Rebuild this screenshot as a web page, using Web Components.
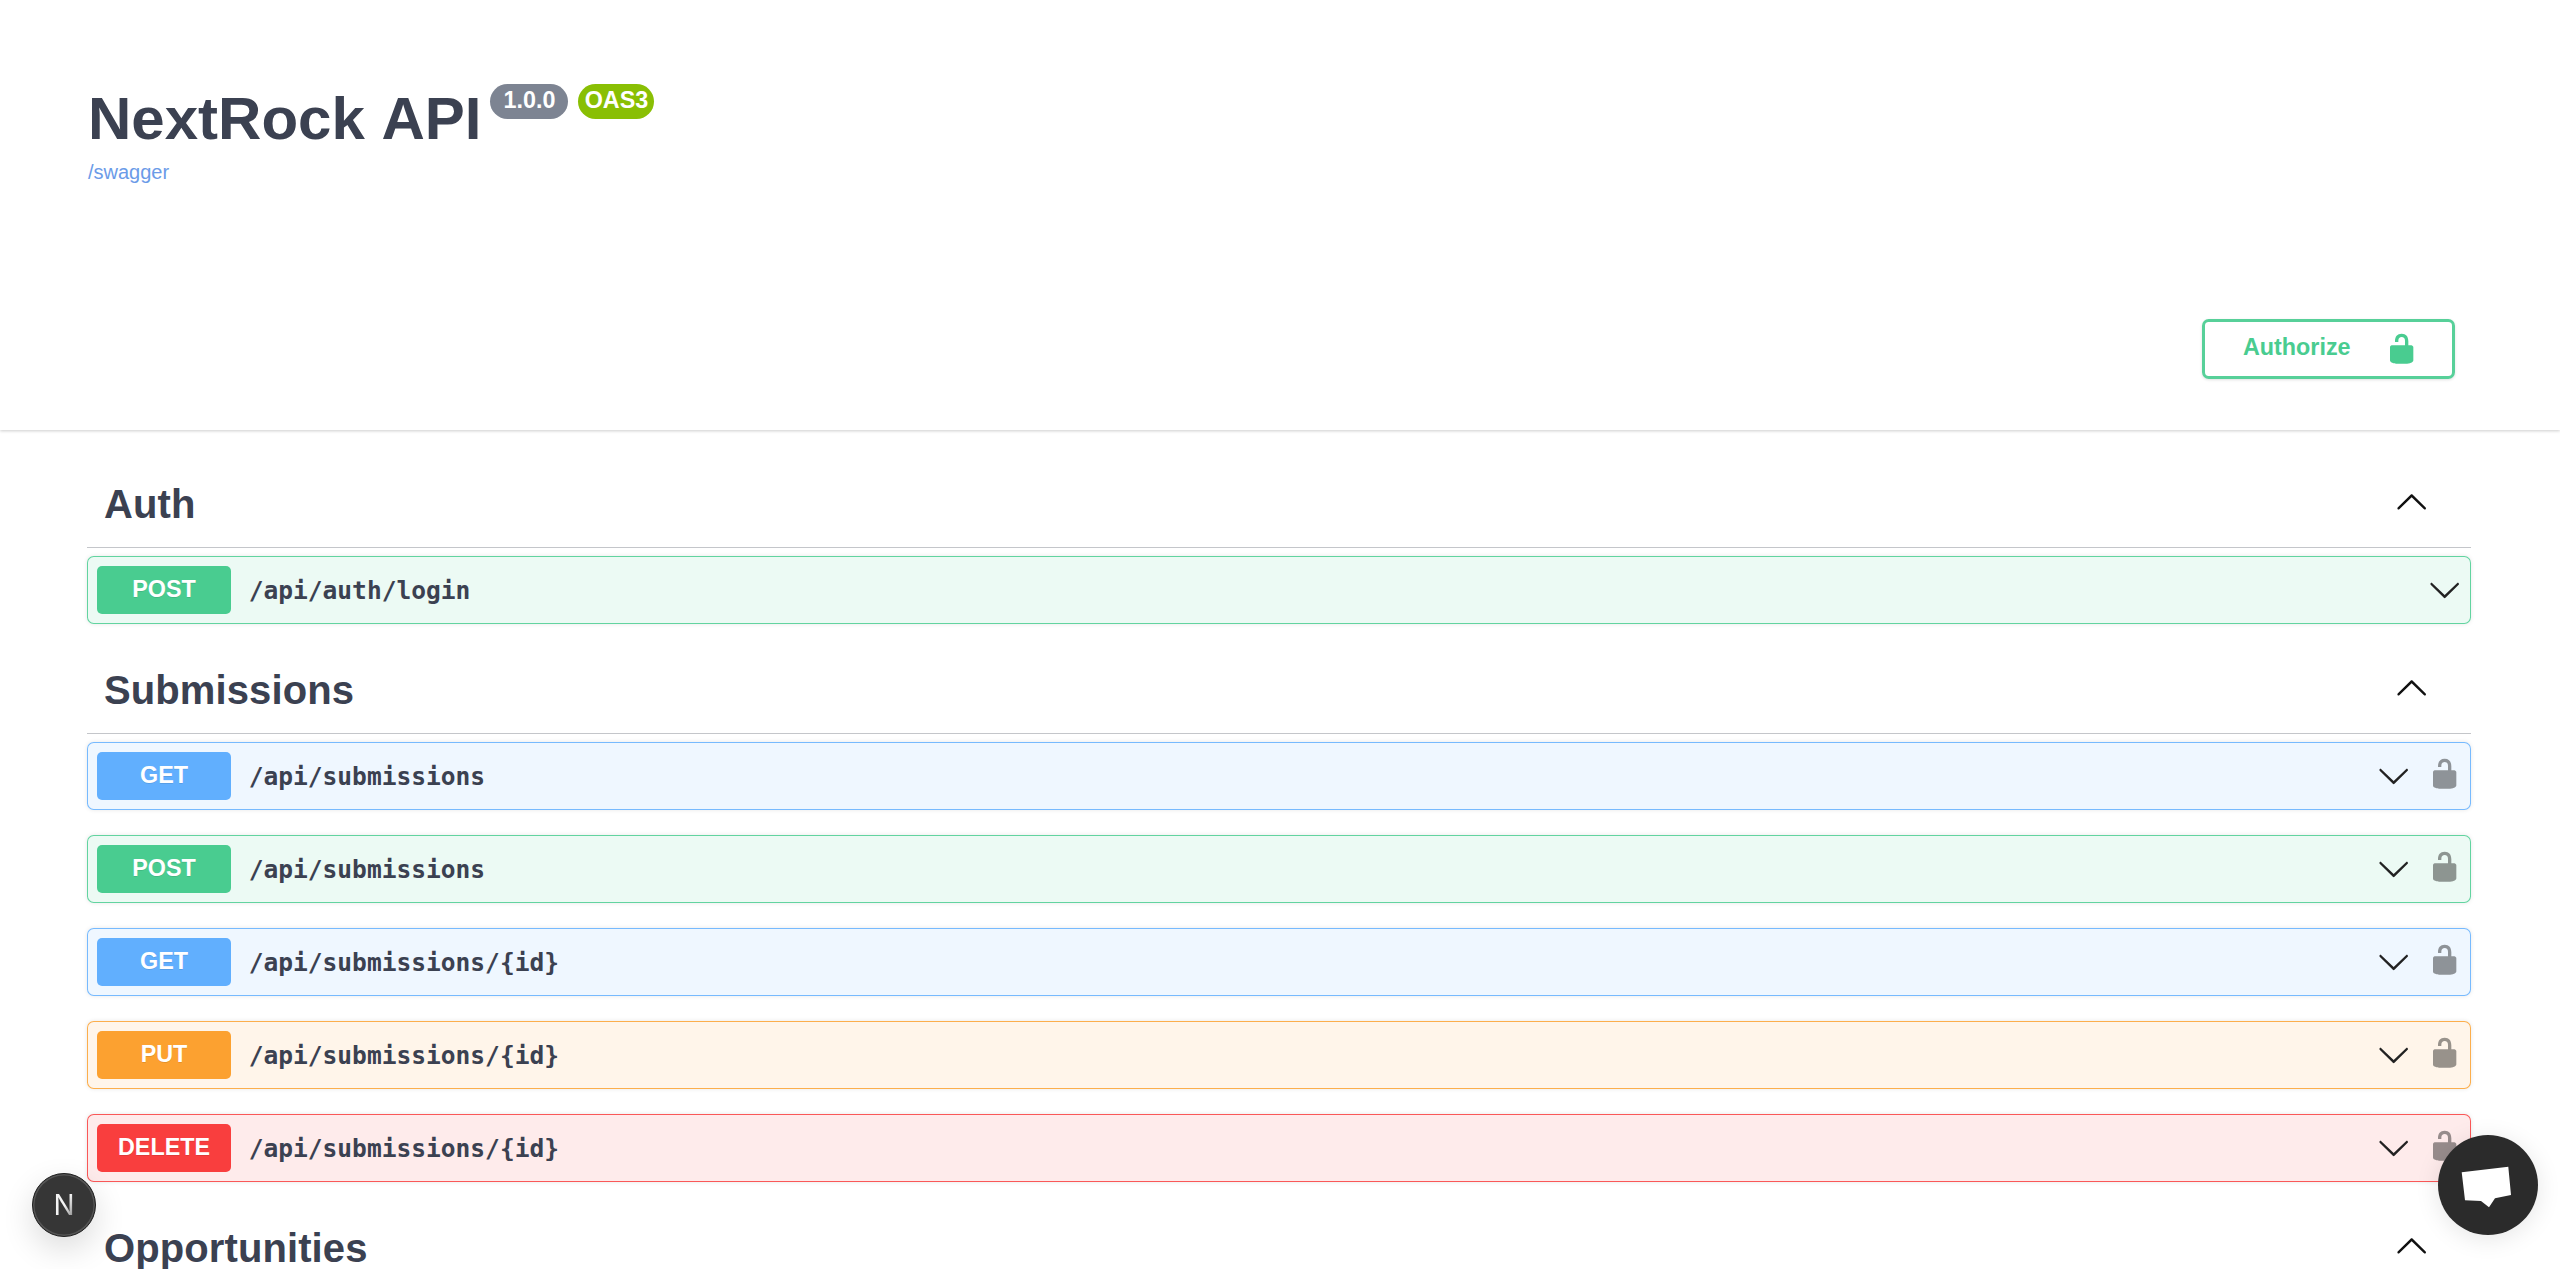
<!DOCTYPE html>
<html>
<head>
<meta charset="utf-8">
<title>NextRock API</title>
<style>
  html, body { margin: 0; height: 100%; overflow: hidden; background: #fff; }
  body { font-family: "Liberation Sans", Arial, sans-serif; color: #3b4151; }
</style>
</head>
<body>
<nr-swagger>
  <nr-info slot="header" title="NextRock API" version="1.0.0" spec="OAS3" url="/swagger"></nr-info>
  <nr-authorize slot="header"></nr-authorize>

  <nr-tag name="Auth">
    <nr-opblock method="post" path="/api/auth/login"></nr-opblock>
  </nr-tag>
  <nr-tag name="Submissions">
    <nr-opblock method="get" path="/api/submissions" locked></nr-opblock>
    <nr-opblock method="post" path="/api/submissions" locked></nr-opblock>
    <nr-opblock method="get" path="/api/submissions/{id}" locked></nr-opblock>
    <nr-opblock method="put" path="/api/submissions/{id}" locked></nr-opblock>
    <nr-opblock method="delete" path="/api/submissions/{id}" locked></nr-opblock>
  </nr-tag>
  <nr-tag name="Opportunities"></nr-tag>
</nr-swagger>
<nr-dev-badge></nr-dev-badge>
<nr-chat-launcher></nr-chat-launcher>

<script>
const LOCK_PATH = 'M15.8 8H14V5.6C14 2.703 12.665 1 10 1 7.334 1 6 2.703 6 5.6V6h2v-.801C8 3.754 8.797 3 10 3c1.203 0 2 .754 2 2.199V8H4c-.553 0-1 .646-1 1.199V17c0 .549.428 1.139.951 1.307l1.197.387C5.672 18.861 6.55 19 7.1 19h5.8c.549 0 1.428-.139 1.951-.307l1.196-.387c.524-.167.953-.757.953-1.306V9.199C17 8.646 16.352 8 15.8 8z'
const ARROW_PATH = 'M17.418 6.109c.272-.268.709-.268.979 0s.271.701 0 .969l-7.908 7.83c-.27.268-.707.268-.979 0l-7.908-7.83c-.27-.268-.27-.701 0-.969.271-.268.709-.268.979 0L10 13.25l7.418-7.141z'

const METHODS = {
  post: '73,204,144',
  get: '97,175,254',
  put: '252,161,48',
  delete: '249,62,62'
}

class Swagger extends HTMLElement {
  constructor() {
    super()
    this.attachShadow({ mode: 'open' }).innerHTML = `
      <style>
      :host { display: block; }
      header {
        height: 430px;
        box-sizing: border-box;
        padding: 0 105px 51px 87px;
        display: flex;
        flex-direction: column;
        justify-content: space-between;
        box-shadow: 0 1px 3px rgba(0,0,0,.2);
      }
      main { padding: 33px 89px 0 87px; }
      </style>
      <header><slot name="header"></slot></header>
      <main><slot></slot></main>
    `
  }
}

class Info extends HTMLElement {
  constructor() {
    super()
    this.attachShadow({ mode: 'open' })
  }
  connectedCallback() {
    const get = n => this.getAttribute(n)
    this.shadowRoot.innerHTML = `
      <style>
      :host { display: block; padding-top: 84px; }
      .title { display: flex; align-items: flex-start; height: 69px; padding-left: 1px; }
      h2 { margin: 0; font-size: 60px; line-height: 69px; font-weight: 700; color: #3b4151; font-kerning: none; }
      .badge {
        height: 35px; border-radius: 18px; color: #fff; font-size: 23.33px; font-weight: 700;
        line-height: 33px; text-align: center; box-sizing: border-box;
      }
      .ver { width: 78px; margin-left: 9px; background: #7d8492; }
      .oas { width: 76px; margin-left: 10px; background: #89bf04; }
      a { display: block; margin-top: 6.5px; margin-left: 1px; font-size: 20px; line-height: 24px; color: #6b9be8; text-decoration: none; }
      </style>
      <div class="title">
        <h2>${get('title')}</h2>
        <span class="badge ver">${get('version')}</span>
        <span class="badge oas">${get('spec')}</span>
      </div>
      <a href="#">${get('url')}</a>
    `
  }
}

class Authorize extends HTMLElement {
  constructor() {
    super()
    this.attachShadow({ mode: 'open' }).innerHTML = `
      <style>
      :host {
        display: flex; align-self: flex-end; align-items: center;
        width: 253px; height: 60px; box-sizing: border-box;
        padding-left: 38px;
        border: 3px solid rgba(73,204,144,.92); border-radius: 6.67px;
        box-shadow: 0 1px 3px rgba(0,0,0,.12);
        color: #49cc90; font-size: 23.33px; font-weight: 700;
      }
      span { width: 142px; margin-top: -3px; }
      svg { width: 33.33px; height: 33.33px; fill: #49cc90; margin-top: -1px; }
      </style>
      <span>Authorize</span>
      <svg viewBox="0 0 20 20"><path d="${LOCK_PATH}"/></svg>
    `
  }
}

class Tag extends HTMLElement {
  constructor() {
    super()
    this.attachShadow({ mode: 'open' })
  }
  connectedCallback() {
    this.shadowRoot.innerHTML = `
      <style>
      :host { display: block; }
      h3 {
        margin: 0 0 8px; height: 85px; box-sizing: border-box;
        display: flex; align-items: center; justify-content: space-between;
        padding: 0 43px 1px 17px;
        border-bottom: 1.67px solid rgba(59,65,81,.3);
        font-size: 40px; font-weight: 700; color: #3b4151;
        letter-spacing: .1px;
      }
      svg { width: 33.33px; height: 33.33px; fill: #111; transform: rotate(180deg); margin-top: -3px; }
      </style>
      <h3><span>${this.getAttribute('name')}</span><svg viewBox="0 0 20 20"><path d="${ARROW_PATH}"/></svg></h3>
      <slot></slot>
    `
  }
}

class Opblock extends HTMLElement {
  constructor() {
    super()
    this.attachShadow({ mode: 'open' })
  }
  connectedCallback() {
    const method = this.getAttribute('method')
    const rgb = METHODS[method]
    const lock = this.hasAttribute('locked')
      ? `<svg class="lock" viewBox="0 0 20 20"><path d="${LOCK_PATH}"/></svg>` : ''
    this.shadowRoot.innerHTML = `
      <style>
      :host {
        display: flex; align-items: center; box-sizing: border-box;
        height: 67.67px; margin-bottom: 25.33px;
        padding: 0 8.5px 0 9.33px;
        background: rgba(${rgb},.1);
        border: 1.67px solid rgba(${rgb},.85);
        border-radius: 6.67px;
        box-shadow: 0 0 4px rgba(0,0,0,.1);
      }
      .method {
        width: 133.33px; height: 48px; flex: none; border-radius: 5px;
        background: rgb(${rgb}); color: #fff;
        font-size: 23.33px; font-weight: 700; line-height: 47px; text-align: center;
        text-shadow: 0 1px 0 rgba(0,0,0,.1);
      }
      .path {
        flex: 1; padding-left: 18px; margin-top: 1px;
        font-family: "DejaVu Sans Mono", "Liberation Mono", monospace;
        font-size: 24.55px; font-weight: 600; color: #3b4151;
      }
      svg { width: 33.33px; height: 33.33px; flex: none; }
      .arrow { fill: #222; }
      .lock { fill: #000; opacity: .4; margin-left: 17.5px; margin-top: -5px; }
      </style>
      <span class="method">${method.toUpperCase()}</span>
      <span class="path">${this.getAttribute('path')}</span>
      <svg class="arrow" viewBox="0 0 20 20"><path d="${ARROW_PATH}"/></svg>
      ${lock}
    `
  }
}

class DevBadge extends HTMLElement {
  constructor() {
    super()
    this.attachShadow({ mode: 'open' }).innerHTML = `
      <style>
      :host {
        position: fixed; left: 32px; top: 1173px;
        width: 64px; height: 64px; box-sizing: border-box;
        display: flex; align-items: center; justify-content: center;
        border-radius: 50%; background: #363636;
        border: 1px solid #1f1f1f;
        box-shadow: inset 0 0 0 1.5px #555, 0 12px 32px rgba(0,0,0,.14);
      }
      span {
        font-family: Inter, "Liberation Sans", sans-serif; font-size: 28px; font-weight: 400; line-height: 1;
        background: linear-gradient(120deg, #f4f4f4 52%, #777 100%);
        -webkit-background-clip: text; background-clip: text; color: transparent;
      }
      </style>
      <span>N</span>
    `
  }
}

class ChatLauncher extends HTMLElement {
  constructor() {
    super()
    this.attachShadow({ mode: 'open' }).innerHTML = `
      <style>
      :host {
        position: fixed; left: 2438px; top: 1135px;
        width: 100px; height: 100px;
        display: flex; align-items: center; justify-content: center;
        border-radius: 50%; background: #2b2b2b;
        box-shadow: 0 4px 24px rgba(0,0,0,.1);
      }
      svg { width: 100px; height: 100px; fill: #fff; }
      </style>
      <svg viewBox="0 0 100 100"><polygon points="23.700,37.300 70.300,31.700 73,60 57,63.300 51,72.300 43,66 27,65.300"/></svg>
    `
  }
}

customElements.define('nr-swagger', Swagger)
customElements.define('nr-info', Info)
customElements.define('nr-authorize', Authorize)
customElements.define('nr-tag', Tag)
customElements.define('nr-opblock', Opblock)
customElements.define('nr-dev-badge', DevBadge)
customElements.define('nr-chat-launcher', ChatLauncher)
</script>
</body>
</html>
